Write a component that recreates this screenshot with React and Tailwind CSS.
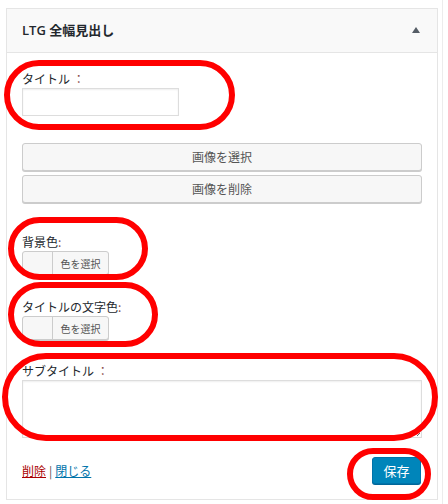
import React from 'react';

const JP = "font-['Noto_Sans_CJK_JP','Noto_Sans',sans-serif]";

const Oval = ({ className }) => (
  <div className={`absolute rounded-full border-[6px] border-[#ff0000] pointer-events-none ${className}`} />
);

const ColorPicker = () => (
  <div className="flex h-[24px] w-[87px] rounded-[3px] border border-[#ccc] bg-[#f7f7f7] shadow-[0_1px_0_#ccc]">
    <div className="w-[30px] border-r border-[#ccc]" />
    <div className="flex flex-1 items-center justify-center text-[10px] text-[#555]">色を選択</div>
  </div>
);

const WideButton = ({ children }) => (
  <button className="flex h-[28px] w-[400px] items-center justify-center rounded-[3px] border border-[#ccc] bg-[#f7f7f7] text-[12px] text-[#555] shadow-[0_1px_0_#ccc]">
    {children}
  </button>
);

const Label = ({ children, colon = '：' }) => (
  <div className="h-[18px] text-[12px] leading-[18px] text-[#23282d]">
    {children}
    <span className="text-[#8a4b4b]">{colon}</span>
  </div>
);

export default function App() {
  return (
    <div className={`relative h-[504px] w-[448px] overflow-hidden bg-white ${JP}`}>
      {/* faint outer edge on the right */}
      <div className="absolute right-[5px] top-0 h-full w-px bg-[#ececec]" />

      <div className="ml-[6px] mt-[8px] w-[432px] border border-[#e5e5e5] bg-white">
        {/* header */}
        <div className="flex h-[44px] items-center justify-between border-b border-[#e5e5e5] bg-[#f9f9f9] pl-[15px] pr-[17px]">
          <h3 className="text-[13px] font-bold text-[#23282d]">
            <span className="font-['Open_Sans','Liberation_Sans',sans-serif] font-semibold">LTG </span>全幅見出し
          </h3>
          <svg width="8" height="6" viewBox="0 0 8 6" className="mt-[-2px]">
            <path d="M4 0 L8 6 L0 6 Z" fill="#555d66" />
          </svg>
        </div>

        {/* body */}
        <div className="px-[15px] pt-[17px] pb-[15px]">
          <Label>タイトル </Label>
          <input className="block h-[28px] w-[157px] border border-[#ddd] bg-white shadow-[inset_0_1px_2px_rgba(0,0,0,0.07)] outline-none" />

          <div className="mt-[27px] flex flex-col gap-[4px]">
            <WideButton>画像を選択</WideButton>
            <WideButton>画像を削除</WideButton>
          </div>

          <div className="mt-[30px]">
            <Label colon=":">背景色</Label>
            <ColorPicker />
          </div>

          <div className="mt-[23px]">
            <Label colon=":">タイトルの文字色</Label>
            <ColorPicker />
          </div>

          <div className="mt-[22px]">
            <Label>サブタイトル </Label>
            <textarea className="block h-[58px] w-[400px] resize-y border border-[#ddd] bg-white shadow-[inset_0_1px_2px_rgba(0,0,0,0.07)] outline-none" />
          </div>

          <div className="mt-[19px] flex items-center justify-between">
            <div className="text-[12px] text-[#555]">
              <a className="text-[#a00] underline">削除</a>
              <span className="mx-[3px]">|</span>
              <a className="text-[#0073aa] underline">閉じる</a>
            </div>
            <button className="mr-[1px] h-[27px] w-[49px] rounded-[3px] border border-[#0073aa] bg-[#0085ba] text-[13px] text-white shadow-[0_1px_0_#006799]">
              保存
            </button>
          </div>
        </div>
      </div>

      {/* red annotation ovals */}
      <Oval className="left-[4px] top-[60px] h-[70px] w-[231px]" />
      <Oval className="left-[8px] top-[217px] h-[63px] w-[140px]" />
      <Oval className="left-[8px] top-[282px] h-[65px] w-[150px]" />
      <Oval className="left-[2px] top-[353px] h-[88px] w-[436px]" />
      <Oval className="left-[347px] top-[448px] h-[52px] w-[84px]" />
    </div>
  );
}
